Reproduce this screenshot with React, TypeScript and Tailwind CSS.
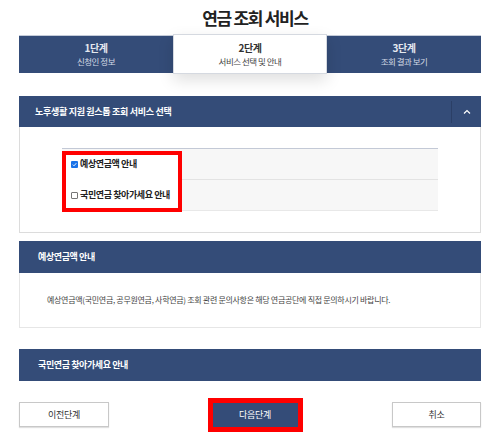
import React from "react";

const steps = [
  { no: "1단계", label: "신청인 정보" },
  { no: "2단계", label: "서비스 선택 및 안내", active: true },
  { no: "3단계", label: "조회 결과 보기" },
];

function Header({ title }: { title: string }) {
  return (
    <div className="flex h-[32px] items-center bg-[#344c78] pl-[19px] text-[9px] font-bold tracking-[-0.4px] text-white">
      {title}
    </div>
  );
}

export default function App() {
  return (
    <div
      className="h-[433px] w-[500px] overflow-hidden bg-white text-[#333]"
      style={{ fontFamily: '"Noto Sans CJK KR", "Noto Sans", sans-serif' }}
    >
      {/* TITLE */}
      <div className="flex h-[35px] items-center justify-center pl-[10px] text-[17px] font-bold tracking-[-1.3px] text-[#222]">
        연금 조회 서비스
      </div>

      {/* STEPS */}
      <div className="mx-[19px] grid h-[38px] grid-cols-3 border-t border-[#c5ccd9] bg-[#344c78]">
        {steps.map((s) =>
          s.active ? (
            <div
              key={s.no}
              className="relative z-10 -mt-[2px] -mb-[1px] flex flex-col items-center justify-center border border-[#d5d9e0] bg-white shadow-[0_6px_16px_rgba(0,0,0,0.13)]"
            >
              <div className="text-[10px] font-bold leading-[14px] tracking-[-0.5px] text-[#333]">{s.no}</div>
              <div className="text-[8.5px] leading-[13px] tracking-[-0.5px] text-[#444]">{s.label}</div>
            </div>
          ) : (
            <div key={s.no} className="flex flex-col items-center justify-center">
              <div className="text-[10px] font-bold leading-[14px] tracking-[-0.5px] text-[#e4e8ef]">{s.no}</div>
              <div className="text-[8.5px] leading-[13px] tracking-[-0.5px] text-[#d3d9e4]">{s.label}</div>
            </div>
          )
        )}
      </div>

      <div className="mx-[19px] mt-[23px]">
        {/* SERVICE SELECT */}
        <div className="flex h-[31px] items-center bg-[#344c78] text-white">
          <div className="flex-1 pl-[16px] text-[9px] font-bold tracking-[-0.3px]">노후생활 지원 원스톱 조회 서비스 선택</div>
          <div className="flex h-[22px] w-[30px] items-center justify-center border-l border-[#2b3f66]">
            <svg width="8" height="5" viewBox="0 0 8 5" fill="none">
              <polyline points="1,4.5 4,1.5 7,4.5" stroke="white" strokeWidth="1.2" />
            </svg>
          </div>
        </div>
        <div className="border border-t-0 border-[#dcdcdc] px-[42px] py-[21px]">
          <div className="relative border-t border-[#c3c9d6]">
            <div className="flex h-[31px] items-center border-b border-[#e3e3e3] bg-[#f7f7f7] pl-[9px]">
              <label className="relative z-10 flex items-center gap-[2px] text-[9px] font-bold tracking-[-0.4px] text-[#222]">
                <span className="flex h-[7px] w-[7px] items-center justify-center rounded-[1px] bg-[#1a73e8]">
                  <svg width="5" height="5" viewBox="0 0 5 5" fill="none">
                    <polyline points="0.8,2.6 2,3.8 4.3,1.2" stroke="white" strokeWidth="0.9" />
                  </svg>
                </span>
                예상연금액 안내
              </label>
            </div>
            <div className="flex h-[31px] items-center border-b border-[#e8e8e8] bg-[#f7f7f7] pl-[9px]">
              <label className="relative z-10 flex items-center gap-[2px] text-[9px] font-bold tracking-[-0.4px] text-[#222]">
                <span className="h-[7px] w-[7px] rounded-[1px] border border-[#767676] bg-white" />
                국민연금 찾아가세요 안내
              </label>
            </div>
            <div className="absolute left-0 top-[2px] z-[5] h-[61px] w-[120px] border-4 border-[#ff0000] bg-white" />
          </div>
        </div>

        {/* EXPECTED PENSION */}
        <div className="mt-[8px]">
          <Header title="예상연금액 안내" />
          <div className="flex h-[55px] items-center border border-t-0 border-[#e6e6e6] pl-[27px] text-[8px] tracking-[-0.3px] text-[#444]">
            예상연금액(국민연금, 공무원연금, 사학연금) 조회 관련 문의사항은 해당 연금공단에 직접 문의하시기 바랍니다.
          </div>
        </div>

        {/* NPS */}
        <div className="mt-[21px]">
          <Header title="국민연금 찾아가세요 안내" />
        </div>

        {/* BUTTONS */}
        <div className="mt-[21px] flex items-center justify-between">
          <button className="h-[25px] w-[90px] border border-[#c8c8c8] bg-white text-[9px] tracking-[-0.3px] text-[#333] shadow-[0_1px_1px_rgba(0,0,0,0.12)]">
            이전단계
          </button>
          <button className="ml-[9px] h-[24px] w-[85px] bg-[#344c78] text-[9px] tracking-[-0.3px] text-white outline-[5px] outline-solid outline-[#ff0000]">
            다음단계
          </button>
          <button className="h-[25px] w-[89px] border border-[#c8c8c8] bg-white text-[9px] tracking-[-0.3px] text-[#333] shadow-[0_1px_1px_rgba(0,0,0,0.12)]">
            취소
          </button>
        </div>
      </div>
    </div>
  );
}
